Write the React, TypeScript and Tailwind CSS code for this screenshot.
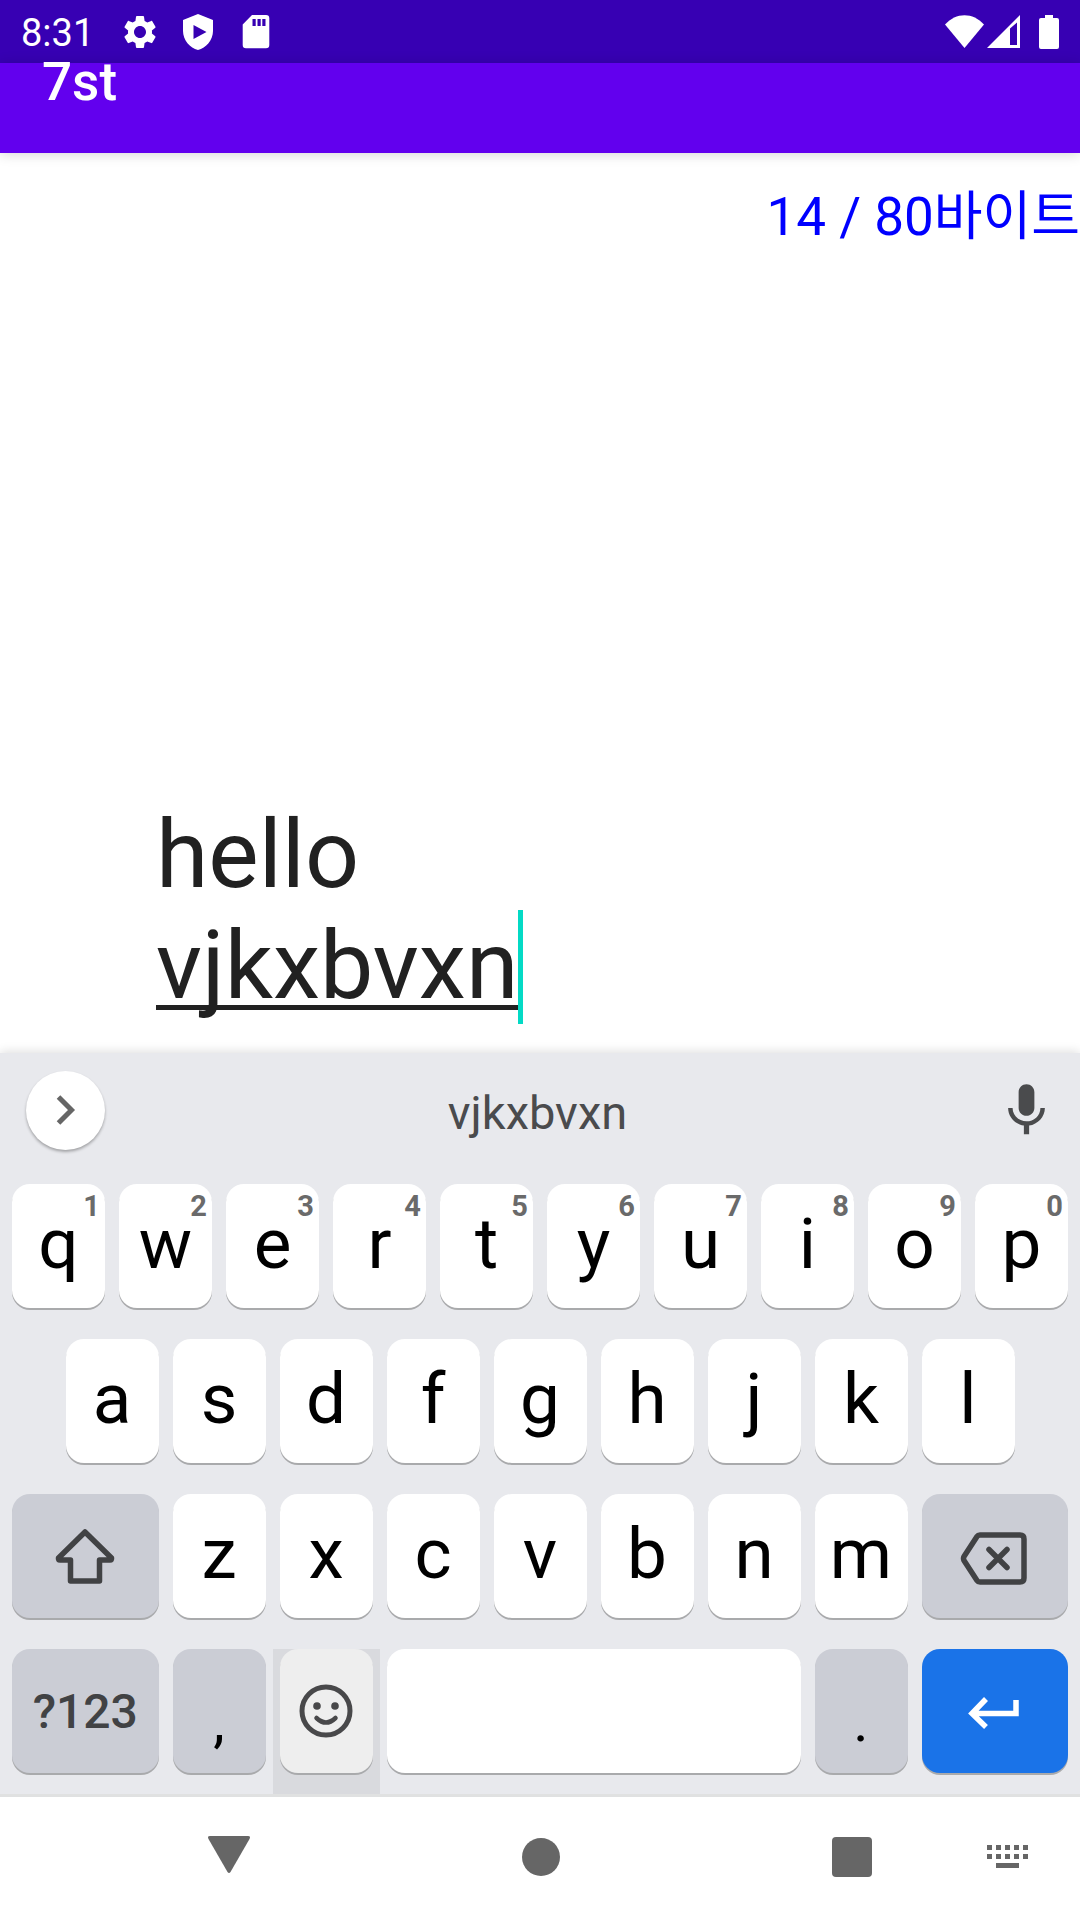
import React from "react";
import clsx from "clsx";

const topRow = ["q", "w", "e", "r", "t", "y", "u", "i", "o", "p"];
const homeRow = ["a", "s", "d", "f", "g", "h", "j", "k", "l"];
const bottomRow = ["z", "x", "c", "v", "b", "n", "m"];

type KeyProps = {
  label: string;
  hint?: string;
  cell?: string;
  face?: string;
  children?: React.ReactNode;
};

function Key({ label, hint, cell = "col-span-2", face = "bg-white pb-[6px] text-[71px] text-black", children }: KeyProps) {
  return (
    <div className={clsx("px-[7px]", cell)}>
      <button
        type="button"
        aria-label={label}
        className={clsx(
          "relative flex h-[124px] w-full items-center justify-center rounded-[18px] leading-none shadow-[0_2px_0_#a9aaac]",
          face,
        )}
      >
        {children ?? label}
        {hint && (
          <span className="absolute top-[6px] right-[5px] text-[29px] leading-8 font-bold text-[#6a6a6a]">{hint}</span>
        )}
      </button>
    </div>
  );
}

function StatusBar() {
  return (
    <header className="flex h-[63px] items-center bg-[#3700b3] px-[21px] text-white">
      <span className="pt-[3px] text-[38px] leading-[45px]">8:31</span>
      <div className="ml-[26px] flex items-center gap-[18px]">
        <svg viewBox="0 0 24 24" className="h-[40px] w-[40px]" fill="currentColor" aria-hidden="true">
          <path d="M19.14 12.94c.04-.3.06-.61.06-.94 0-.32-.02-.64-.07-.94l2.03-1.58c.18-.14.23-.41.12-.61l-1.92-3.32c-.12-.22-.37-.29-.59-.22l-2.39.96c-.5-.38-1.03-.7-1.62-.94l-.36-2.54c-.04-.24-.24-.41-.48-.41h-3.84c-.24 0-.43.17-.47.41l-.36 2.54c-.59.24-1.13.57-1.62.94l-2.39-.96c-.22-.08-.47 0-.59.22L2.74 8.87c-.12.21-.08.47.12.61l2.03 1.58c-.05.3-.09.63-.09.94s.02.64.07.94l-2.03 1.58c-.18.14-.23.41-.12.61l1.92 3.32c.12.22.37.29.59.22l2.39-.96c.5.38 1.03.7 1.62.94l.36 2.54c.05.24.24.41.48.41h3.84c.24 0 .44-.17.47-.41l.36-2.54c.59-.24 1.13-.56 1.62-.94l2.39.96c.22.08.47 0 .59-.22l1.92-3.32c.12-.22.07-.47-.12-.61l-2.01-1.58zM12 15.6c-1.98 0-3.6-1.62-3.6-3.6s1.62-3.6 3.6-3.6 3.6 1.62 3.6 3.6-1.62 3.6-3.6 3.6z" />
        </svg>
        <svg viewBox="0 0 40 40" className="h-[40px] w-[40px]" fill="currentColor" aria-hidden="true">
          <path
            fillRule="evenodd"
            d="M20 2L35 8V19C35 28 28 36 20 38C12 36 5 28 5 19V8ZM15.500 13V27L28.500 20Z"
          />
        </svg>
        <svg viewBox="0 0 40 40" className="h-[40px] w-[40px]" fill="currentColor" aria-hidden="true">
          <path
            fillRule="evenodd"
            d="M16 3H30A3.300 3.300 0 0 1 33.300 6.300V33A3.300 3.300 0 0 1 30 36.300H10A3.300 3.300 0 0 1 6.700 33V12.500ZM16.500 7V14H19.700V7ZM21.500 7V14H24.700V7ZM26.300 7V14H29.500V7Z"
          />
        </svg>
      </div>
      <div className="ml-auto flex items-center text-white">
        <svg viewBox="0 0 39 34" className="h-[34px] w-[39px]" fill="currentColor" aria-hidden="true">
          <path d="M0 9.500C11-3 28-3 39 9.500L19.500 33Z" />
        </svg>
        <svg viewBox="0 0 34 34" className="ml-[3px] h-[34px] w-[34px]" fill="currentColor" aria-hidden="true">
          <path fillRule="evenodd" d="M0 33L33 0V33ZM23 13.500V30H30V7.500Z" />
        </svg>
        <svg viewBox="0 0 20 34" className="ml-[18px] h-[34px] w-[20px]" fill="currentColor" aria-hidden="true">
          <path d="M6 0H14V3H18Q20 3 20 5V32Q20 34 18 34H2Q0 34 0 32V5Q0 3 2 3H6Z" />
        </svg>
      </div>
    </header>
  );
}

function Keyboard() {
  return (
    <section aria-label="Keyboard" className="bg-[#e8e9ed] shadow-[0_-1px_10px_rgba(0,0,0,0.14)]">
      <div className="flex h-[131px] items-start justify-between pt-[18px] pr-[22px] pl-[26px]">
        <button
          type="button"
          aria-label="Expand toolbar"
          className="flex h-[79px] w-[79px] items-center justify-center rounded-full bg-white text-[#666666] shadow-[0_2px_3px_rgba(0,0,0,0.3)]"
        >
          <svg viewBox="0 0 30 40" className="h-[40px] w-[30px]" fill="none" stroke="currentColor" strokeWidth="5" aria-hidden="true">
            <path d="M7.500 6L20.500 19L7.500 32" />
          </svg>
        </button>
        <button type="button" className="flex-1 pt-[2px] text-[47px] leading-[79px] text-[#4a4b4d]">
          vjkxbvxn
        </button>
        <button type="button" aria-label="Voice input" className="flex h-[79px] w-[88px] items-center justify-end text-[#4a4b4d]">
          <svg viewBox="0 0 24 24" className="h-[63px] w-[63px] shrink-0" fill="currentColor" aria-hidden="true">
            <path d="M12 14c1.660 0 3-1.340 3-3V5c0-1.660-1.340-3-3-3S9 3.340 9 5v6c0 1.660 1.340 3 3 3zm5.300-3c0 3-2.540 5.100-5.300 5.100S6.700 14 6.700 11H5c0 3.410 2.720 6.230 6 6.720V21h2v-3.280c3.280-.48 6-3.300 6-6.720h-1.700z" />
          </svg>
        </button>
      </div>

      <div className="grid grid-cols-20 gap-y-[31px] px-[5px]">
        {topRow.map((k, i) => (
          <Key key={k} label={k} hint={String((i + 1) % 10)} />
        ))}

        {homeRow.map((k) => (
          <Key key={k} label={k} cell={k === "a" ? "col-start-2 col-span-2" : "col-span-2"} />
        ))}

        <Key label="Shift" cell="col-start-1 col-span-3" face="bg-[#cbcdd5] pt-[2px] text-[#414244]">
          <svg viewBox="0 0 60 60" className="h-[60px] w-[60px]" fill="none" stroke="currentColor" strokeWidth="5.500" strokeLinejoin="round" aria-hidden="true">
            <path d="M30 5L56.500 31Q57 33 55 33H44.500V54H15.500V33H5Q3 33 3.500 31Z" />
          </svg>
        </Key>
        {bottomRow.map((k) => (
          <Key key={k} label={k} />
        ))}
        <Key label="Backspace" cell="col-span-3" face="bg-[#cbcdd5] pt-[4px] pr-[2px] text-[#414244]">
          <svg viewBox="0 0 68 54" className="h-[54px] w-[68px]" fill="none" stroke="currentColor" strokeWidth="5.500" strokeLinejoin="round" strokeLinecap="round" aria-hidden="true">
            <path d="M20 4H60Q64 4 64 8V47Q64 51 60 51H20Q18 51 17 49.500L4 29.500Q3 27.500 4 25.500L17 5.500Q18 4 20 4Z" />
            <path d="M29 18.500L47 36.500M47 18.500L29 36.500" />
          </svg>
        </Key>

        <Key label="?123" cell="col-span-3 pb-[21px]" face="bg-[#cbcdd5] pt-[2px] text-[48px] font-medium text-[#414244]" />
        <Key label="," cell="col-span-2 pb-[21px]" face="bg-[#cbcdd5] pt-[20px] text-[58px] text-black" />
        <Key label="Emoji" cell="col-span-2 bg-[#d9dade] pb-[21px]" face="bg-[#eeeeee] text-[#48484a]">
          <svg viewBox="0 0 54 54" className="h-[54px] w-[54px]" fill="none" stroke="currentColor" strokeWidth="5" aria-hidden="true">
            <circle cx="27" cy="27" r="24" />
            <circle cx="18" cy="22" r="3.800" fill="currentColor" stroke="none" />
            <circle cx="36" cy="22" r="3.800" fill="currentColor" stroke="none" />
            <path d="M17.500 34Q27 43 36.500 34" strokeWidth="4.500" strokeLinecap="round" />
          </svg>
        </Key>
        <Key label="Space" cell="col-span-8 pb-[21px]" face="bg-white">
          <span />
        </Key>
        <Key label="." cell="col-span-2 pb-[21px]" face="bg-[#cbcdd5] pt-[20px] text-[58px] text-black" />
        <Key label="Enter" cell="col-span-3 pb-[21px]" face="bg-[#1a73e8] pt-[4px] pr-[2px] text-white">
          <svg viewBox="0 0 52 34" className="h-[34px] w-[52px]" fill="none" stroke="currentColor" strokeWidth="5.500" aria-hidden="true">
            <path d="M18 3L4 17.500L18 31M4 17.500H48V4" />
          </svg>
        </Key>
      </div>
    </section>
  );
}

function NavigationBar() {
  return (
    <nav aria-label="System navigation" className="relative flex h-[126px] items-center justify-center border-t-[3px] border-[#e0e1e1] bg-white pb-[4px] text-[#666666]">
      <div className="flex w-[664px] items-center justify-between">
        <button type="button" aria-label="Back">
          <svg viewBox="0 0 42 42" className="h-[42px] w-[42px]" fill="currentColor" aria-hidden="true">
            <path d="M2 0H40Q43 0 41.500 3L22.500 36Q21 38 19.500 36L.5 3Q-1 0 2 0Z" />
          </svg>
        </button>
        <button type="button" aria-label="Home" className="h-[38px] w-[38px] rounded-full bg-[#666666]" />
        <button type="button" aria-label="Recent apps" className="h-[40px] w-[40px] rounded-[4px] bg-[#666666]" />
      </div>
      <button type="button" aria-label="Choose keyboard" className="absolute right-[52px]">
        <svg viewBox="0 0 41 23" className="h-[23px] w-[41px]" fill="currentColor" aria-hidden="true">
          <path d="M0 0h5v5H0zM9 0h5v5H9zM18 0h5v5h-5zM27 0h5v5h-5zM36 0h5v5h-5zM0 9h5v5H0zM9 9h5v5H9zM18 9h5v5h-5zM27 9h5v5h-5zM36 9h5v5h-5zM9 18h23v5H9z" />
        </svg>
      </button>
    </nav>
  );
}

export default function App() {
  return (
    <div className="flex min-h-screen flex-col bg-white font-[Roboto,'Noto_Sans_CJK_KR',sans-serif]">
      <StatusBar />
      <div className="h-[90px] bg-[#6200ee] px-[42px] shadow-[0_1px_12px_rgba(0,0,0,0.17)]">
        <h1 className="text-[53px] leading-[38px] font-medium text-white">7st</h1>
      </div>
      <main className="flex flex-1 flex-col justify-between">
        <p className="pt-[31px] text-right text-[53px] leading-[66px] text-[#0000ff]">14 / 80바이트</p>
        <div className="px-[156px] pb-[29px] text-[95px] leading-[111px] text-[#212121]" role="textbox" aria-multiline="true" aria-label="Message">
          <div>hello</div>
          <div className="flex">
            <span className="underline decoration-[5px] underline-offset-[7px] [text-decoration-skip-ink:none]">vjkxbvxn</span>
            <span className="h-[114px] w-[5px] bg-[#03dac5]" />
          </div>
        </div>
      </main>
      <Keyboard />
      <NavigationBar />
    </div>
  );
}
